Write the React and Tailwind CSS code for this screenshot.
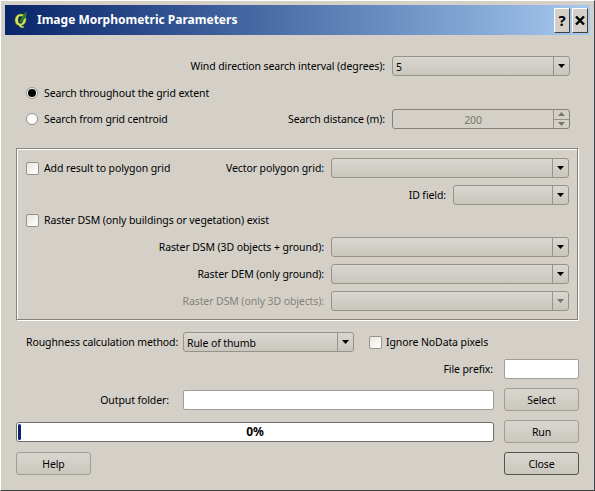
import React from 'react';

const Q = () => (
  <svg width="14" height="18" viewBox="0 0 14 18" className="shrink-0">
    <path d="M7 3C3.500 3 1 5.800 1 9.500c0 2.700 1.700 4.600 4 4.900.6 1.500 2.200 2.600 4.600 2.300l.6-1.400c-1.400.2-2.300-.1-2.900-.9 2.900-.6 4.700-3 4.700-6C12 5.300 10 3 7 3zM6.600 5c1.600 0 2.500 1.300 2.500 3.700 0 2.500-1.200 4-2.600 4-1.500 0-2.500-1.300-2.500-3.700C4 6.600 5.100 5 6.600 5z" fill="#dfe85a" stroke="#6d8a24" strokeWidth="0.5" />
    <path d="M6 12c-.4-3.500 1.800-7 6.500-11.500.6 4.500-1.800 8.800-6.500 11.500z" fill="#2f7d2a" />
  </svg>
);

const Arrow = ({ off }) => (
  <svg width="7" height="4" viewBox="0 0 7 4"><path d="M0 0h7L3.500 4z" fill={off ? '#77756f' : '#000'} /></svg>
);

const Label = ({ children, className = '' }) => (
  <span className={`pt-[2px] ${className}`}>{children}</span>
);

const Combo = ({ w, value, off }) => (
  <div className={`${w} h-5 flex shrink-0 rounded-[3px] border border-[#96938c] bg-gradient-to-b from-[#dad7d0] to-[#c9c6be]`}>
    <div className="flex-1 pl-[3px] leading-[20px] text-black">{value}</div>
    <div className="w-4 border-l border-[#96938c] flex items-center justify-center"><Arrow off={off} /></div>
  </div>
);

const Check = () => (
  <span className="block w-[13px] h-[13px] shrink-0 rounded-[2px] border border-[#96938c] bg-gradient-to-br from-[#e8e6e1] to-white" />
);

const Radio = ({ on }) => (
  <span className="w-3 h-3 shrink-0 rounded-full border border-[#96938c] bg-white flex items-center justify-center">
    {on && <span className="w-2 h-2 rounded-full bg-black" />}
  </span>
);

const Btn = ({ children, strong }) => (
  <button className={`block w-[75px] h-[23px] shrink-0 pt-[2px] rounded-[3px] border bg-gradient-to-b from-[#dad7d0] to-[#c9c6be] text-black ${strong ? 'border-[#55534e]' : 'border-[#a09d96]'}`}>{children}</button>
);

const Field = ({ w }) => (
  <div className={`${w} h-5 shrink-0 rounded-[2px] border border-[#a09d96] bg-white`} />
);

const TitleBtn = ({ children }) => (
  <div className="w-4 h-[25px] shrink-0 bg-[#d4d0c8] border-t border-l border-white border-r border-b border-r-[#404040] border-b-[#404040] flex items-center justify-center font-bold text-[15px] leading-none text-black">{children}</div>
);

const App = () => {
  return (
    <div className="w-[595px] h-[491px] bg-[#d4d0c8] border-t border-l border-white border-r border-b border-r-[#404040] border-b-[#404040] p-1 flex flex-col text-[10.500px] tracking-[-0.1px] whitespace-nowrap text-black overflow-hidden" style={{ fontFamily: '"Noto Sans", sans-serif' }}>
      {/* title bar */}
      <div className="h-[30px] shrink-0 bg-gradient-to-r from-[#0a246a] to-[#a6caf0] flex items-center pl-[9px] pr-[2px]">
        <Q />
        <span className="ml-[9px] font-bold text-xs tracking-normal text-white flex-1">Image Morphometric Parameters</span>
        <div className="flex gap-[2px]">
          <TitleBtn>?</TitleBtn>
          <TitleBtn>
            <svg width="10" height="9" viewBox="0 0 10 9"><path d="M1 0.500l8 8M9 0.500l-8 8" stroke="#000" strokeWidth="2.400" /></svg>
          </TitleBtn>
        </div>
      </div>

      <div className="flex-1 flex flex-col">
        <div className="flex items-center justify-end h-5 mt-[21px] pr-[20px]">
          <Label className="mr-[7px]">Wind direction search interval (degrees):</Label>
          <Combo w="w-[178px]" value="5" />
        </div>

        <div className="flex items-center h-5 mt-[7px] pl-[21px] gap-[6px]">
          <Radio on /><Label>Search throughout the grid extent</Label>
        </div>

        <div className="flex items-center h-5 mt-[6px] pl-[21px] pr-[20px]">
          <Radio />
          <Label className="ml-[6px]">Search from grid centroid</Label>
          <Label className="ml-auto mr-[7px]">Search distance (m):</Label>
          <div className="w-[178px] h-5 flex shrink-0 rounded-[3px] border border-[#85827b] bg-[#d4d0c8]">
            <div className="flex-1 text-center leading-[20px] text-[#77756f]">200</div>
            <div className="w-4 border-l border-[#96938c] flex flex-col">
              <div className="flex-1 flex items-center justify-center border-b border-[#96938c]"><svg width="7" height="4" viewBox="0 0 7 4"><path d="M0 4h7L3.500 0z" fill="#77756f" /></svg></div>
              <div className="flex-1 flex items-center justify-center"><Arrow off /></div>
            </div>
          </div>
        </div>

        {/* group box */}
        <div className="mt-[19px] mx-[11px] h-[173px] border-t border-l border-[#85827b] border-r border-b border-r-white border-b-white shadow-[inset_-1px_-1px_0_#85827b,inset_1px_1px_0_#fff] flex flex-col pl-[9px] pr-[9px] pt-[9px]">
          <div className="flex items-center h-5">
            <Check /><Label className="ml-[5px]">Add result to polygon grid</Label>
            <Label className="ml-auto mr-[7px]">Vector polygon grid:</Label>
            <Combo w="w-[238px]" />
          </div>
          <div className="flex items-center justify-end h-5 mt-[7px]">
            <Label className="mr-[7px]">ID field:</Label>
            <Combo w="w-[116px]" />
          </div>
          <div className="flex items-center h-5 mt-[5px]">
            <Check /><Label className="ml-[5px]">Raster DSM (only buildings or vegetation) exist</Label>
          </div>
          <div className="flex items-center justify-end h-5 mt-[7px]">
            <Label className="mr-[7px]">Raster DSM (3D objects + ground):</Label>
            <Combo w="w-[238px]" />
          </div>
          <div className="flex items-center justify-end h-5 mt-[7px]">
            <Label className="mr-[7px]">Raster DEM (only ground):</Label>
            <Combo w="w-[238px]" />
          </div>
          <div className="flex items-center justify-end h-5 mt-[7px]">
            <Label className="mr-[7px] text-[#85827b]">Raster DSM (only 3D objects):</Label>
            <Combo w="w-[238px]" off />
          </div>
        </div>

        <div className="flex items-center h-5 mt-[11px] pl-[21px]">
          <Label className="w-[157px] shrink-0">Roughness calculation method:</Label>
          <Combo w="w-[171px]" value="Rule of thumb" />
          <span className="ml-[15px]"><Check /></span>
          <Label className="ml-[4px]">Ignore NoData pixels</Label>
        </div>

        <div className="flex items-center justify-end h-5 mt-[7px] pr-[11px]">
          <Label className="mr-[11px]">File prefix:</Label>
          <Field w="w-[75px]" />
        </div>

        <div className="flex items-center h-[23px] mt-[9px] px-[11px]">
          <Label className="w-[167px] shrink-0 text-right pr-[14px]">Output folder:</Label>
          <Field w="w-[311px]" />
          <span className="ml-[10px]"><Btn>Select</Btn></span>
        </div>

        <div className="flex items-center h-[23px] mt-[9px] px-[11px]">
          <div className="relative w-[478px] h-5 shrink-0 rounded-[3px] border border-[#6f6d67] bg-white flex items-center justify-center font-bold text-xs text-black">
            <span className="absolute left-[1px] top-[1px] bottom-[1px] w-[3px] rounded-[2px] bg-[#0a246a]" />
            0%
          </div>
          <span className="ml-[10px]"><Btn>Run</Btn></span>
        </div>

        <div className="flex items-center justify-between h-[23px] mt-[9px] px-[11px]">
          <Btn>Help</Btn>
          <Btn strong>Close</Btn>
        </div>
      </div>
    </div>
  );
};

export default App;
